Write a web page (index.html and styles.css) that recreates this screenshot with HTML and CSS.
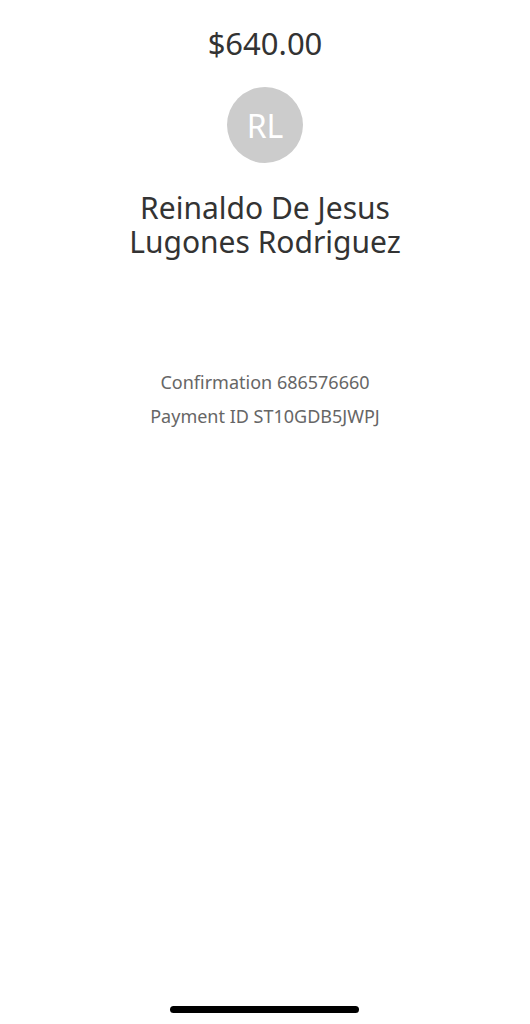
FILE: index.html
```html
<!DOCTYPE html>
<html lang="en">
<head>
    <meta charset="UTF-8">
    <meta name="viewport" content="width=device-width, initial-scale=1.0">
    <title>Payment Details</title>
    <link rel="stylesheet" href="styles.css">
</head>
<body>
    <div class="screen">
        <div class="amount">$640.00</div>
        <div class="avatar">RL</div>
        <h2 class="name">
            <span class="name-line">Reinaldo De Jesus</span>
            <span class="name-line">Lugones Rodriguez</span>
        </h2>
        <div class="details">
            <p>Confirmation 686576660</p>
            <p>Payment ID ST10GDB5JWPJ</p>
        </div>
        <div class="home-bar"></div>
    </div>
</body>
</html>
```

FILE: styles.css
```css
body {
    font-family: "Noto Sans", "Open Sans", sans-serif;
    background: #ffffff;
    color: #333333;
    margin: 0;
}
.screen {
    height: 1024px;
    display: flex;
    flex-direction: column;
    align-items: center;
    position: relative;
}
.amount {
    margin-top: 23px;
    font-size: 31px;
    line-height: 40px;
    color: #333;
}
.avatar {
    margin-top: 24px;
    width: 76px;
    height: 76px;
    border-radius: 50%;
    background-color: #cccccc;
    color: #ffffff;
    font-size: 32px;
    display: flex;
    align-items: center;
    justify-content: center;
}
.name {
    margin: 28px 0 0;
    font-weight: normal;
    font-size: 30px;
    text-align: center;
    color: #333;
    display: flex;
    flex-direction: column;
    gap: 0;
}
.name-line {
    display: block;
    height: 34px;
    line-height: 34px;
}
.details {
    margin-top: 106px;
    text-align: center;
    color: #666;
    font-size: 18px;
}
.details p {
    margin: 0;
    line-height: 34px;
}
.home-bar {
    position: absolute;
    bottom: 11px;
    left: 170px;
    width: 189px;
    height: 7px;
    border-radius: 4px;
    background: #000;
}
```
